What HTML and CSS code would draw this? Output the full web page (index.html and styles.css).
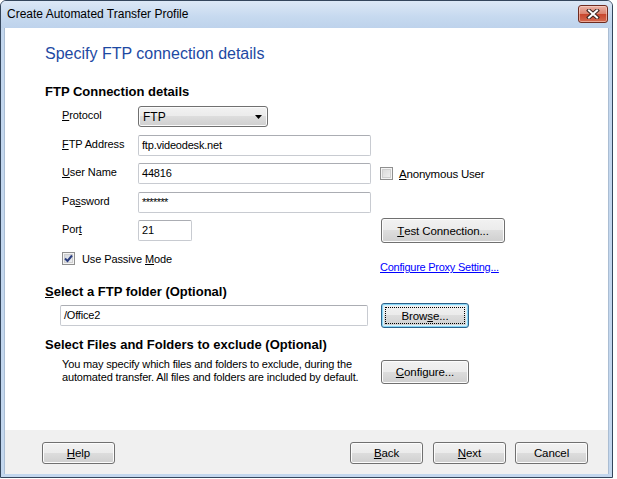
FILE: index.html
```html
<!DOCTYPE html>
<html>
<head>
<meta charset="utf-8">
<link rel="stylesheet" href="styles.css">
</head>
<body>
<div class="window">
  <div class="titlebar">
    <span class="title">Create Automated Transfer Profile</span>
    <div class="close">
      <svg width="14" height="10" viewBox="0 0 14 10">
        <path d="M3 1.5 L11 8.5 M11 1.5 L3 8.5" stroke="#3a2420" stroke-width="4" stroke-linecap="square"/>
        <path d="M3 1.5 L11 8.5 M11 1.5 L3 8.5" stroke="#ffffff" stroke-width="2" stroke-linecap="square"/>
      </svg>
    </div>
  </div>
  <div class="client">
    <div class="content">
      <div class="heading">Specify FTP connection details</div>
      <div class="section section-first">FTP Connection details</div>
      <div class="form-grid">
        <div class="label"><u>P</u>rotocol</div>
        <div class="select"><span>FTP</span><svg width="7" height="4" viewBox="0 0 7 4"><path d="M0 0 H7 L3.5 4 Z" fill="#000"/></svg></div>
        <div></div>

        <div class="label"><u>F</u>TP Address</div>
        <div class="textbox">ftp.videodesk.net</div>
        <div></div>

        <div class="label"><u>U</u>ser Name</div>
        <div class="textbox">44816</div>
        <div class="check-line"><span class="checkbox"></span><span><u>A</u>nonymous User</span></div>

        <div class="label">Pa<u>s</u>sword</div>
        <div class="textbox password">*******</div>
        <div></div>

        <div class="label">Por<u>t</u></div>
        <div class="textbox port">21</div>
        <div class="right-cell"><div class="btn btn-test"><u>T</u>est Connection...</div></div>

        <div class="check-line passive"><span class="checkbox checked"><svg width="11" height="11" viewBox="0 0 11 11"><path d="M2 5.5 L4.5 8 L9 2.5" fill="none" stroke="#2c3f80" stroke-width="2"/></svg></span><span>Use Passive <u>M</u>ode</span></div>
        <div class="link-cell"><span class="link">Configure Proxy Setting...</span></div>
      </div>

      <div class="section section-folder"><u>S</u>elect a FTP folder (Optional)</div>
      <div class="folder-row">
        <div class="textbox folder">/Office2</div>
        <div class="btn btn-browse">Brow<u>s</u>e...</div>
      </div>

      <div class="section section-exclude">Select Files and Folders to exclude (Optional)</div>
      <div class="exclude-row">
        <p class="desc">You may specify which files and folders to exclude, during the<br>automated transfer. All files and folders are included by default.</p>
        <div class="btn btn-configure"><u>C</u>onfigure...</div>
      </div>
    </div>
    <div class="footer">
      <div class="btn btn-foot"><u>H</u>elp</div>
      <div class="spacer"></div>
      <div class="btn btn-foot"><u>B</u>ack</div>
      <div class="btn btn-foot btn-next"><u>N</u>ext</div>
      <div class="btn btn-foot btn-cancel">Cancel</div>
    </div>
  </div>
</div>
</body>
</html>
```

FILE: styles.css
```css
* { box-sizing: border-box; }

body {
  margin: 0;
  background: #ffffff;
  font-family: "Liberation Sans", Arial, sans-serif;
  font-size: 11px;
  color: #000;
}

u { text-decoration: underline; text-underline-offset: 1px; }

.window {
  width: 613px;
  height: 478px;
  border: 1px solid #34465c;
  border-radius: 6px 6px 0 0;
  background: #c3d7ee;
  padding: 0 3px 3px;
  display: flex;
  flex-direction: column;
}

.titlebar {
  height: 27px;
  margin: 0 -3px;
  padding: 0 4px 0 6px;
  display: flex;
  align-items: center;
  background: linear-gradient(#dce8f6, #c6d9ef 60%, #bed3ec);
  border-radius: 5px 5px 0 0;
}

.title {
  font-size: 12px;
  color: #000;
  line-height: 15px;
  margin-top: -1px;
}

.close {
  margin-left: auto;
  align-self: flex-start;
  margin-top: 4px;
  width: 30px;
  height: 18px;
  border: 1px solid #6e2b20;
  border-radius: 3px;
  background: linear-gradient(#eab2a6, #dc8470 48%, #c8472e 52%, #d46a50);
  box-shadow: inset 0 0 0 1px rgba(255, 220, 210, 0.55);
  display: flex;
  align-items: center;
  justify-content: center;
}

.client {
  flex: 1;
  background: #ffffff;
  display: flex;
  flex-direction: column;
  border-left: 1px solid #aabdd3;
  border-right: 1px solid #aabdd3;
}

.content {
  flex: 1;
  padding: 16px 0 0 40px;
}

.heading {
  font-size: 16px;
  line-height: 20px;
  color: #1d49a3;
}

.section {
  font-size: 13px;
  font-weight: bold;
  line-height: 16px;
}

.section-first { margin-top: 20px; }

.form-grid {
  margin-top: 6px;
  margin-left: 17px;
  display: grid;
  grid-template-columns: 67px 233px auto;
  grid-template-rows: 21px 21px 21px 21px 21px 25.5px;
  row-gap: 7.5px;
  column-gap: 9px;
}

.label {
  align-self: center;
  line-height: 13px;
  letter-spacing: -0.1px;
  margin-top: -2px;
  white-space: nowrap;
}

.textbox {
  height: 21px;
  border: 1px solid #c8cbd1;
  border-top-color: #abadb3;
  border-radius: 2px;
  padding: 0 3px;
  line-height: 19px;
  letter-spacing: -0.2px;
  background: #fff;
}

.textbox.password { letter-spacing: -0.6px; line-height: 18px; }
.textbox.port { width: 54px; }

.select {
  width: 130px;
  height: 21px;
  border: 1px solid #707070;
  border-radius: 3px;
  background: linear-gradient(#f2f2f2, #ebebeb 50%, #dddddd 50%, #cfcfcf);
  box-shadow: inset 0 0 0 1px #fbfbfb;
  display: flex;
  align-items: center;
  justify-content: space-between;
  padding: 0 5px 0 4px;
  font-size: 12px;
}

.check-line {
  display: flex;
  align-items: center;
  gap: 6px;
  align-self: center;
}

.check-line span:last-child { font-size: 11.5px; letter-spacing: -0.2px; }

.checkbox {
  width: 13px;
  height: 13px;
  border: 1px solid #8f8f8f;
  background: linear-gradient(135deg, #d6d6d6, #f4f4f4);
  box-shadow: inset 0 0 0 1px #f4f4f4, inset 0 0 0 2px #cfcfcf;
  display: flex;
  align-items: center;
  justify-content: center;
  flex: none;
}

.checkbox.checked {
  background: linear-gradient(135deg, #cdd3dd, #f4f4f4);
}

.passive {
  grid-column: 1 / 3;
  align-self: start;
  margin-top: 3.5px;
  gap: 7px;
}
.passive span:last-child { font-size: 11px; letter-spacing: -0.1px; }

.link-cell {
  align-self: end;
  line-height: 13px;
}

.link {
  color: #0000ff;
  text-decoration: underline;
  letter-spacing: -0.25px;
}

.right-cell {
  align-self: center;
  margin-left: 1px;
}

.btn {
  border: 1px solid #707070;
  border-radius: 3px;
  background: linear-gradient(#f2f2f2, #ebebeb 50%, #dddddd 50%, #cfcfcf);
  box-shadow: inset 0 0 0 1px #fcfcfc;
  display: flex;
  align-items: center;
  justify-content: center;
  font-size: 11.5px;
  letter-spacing: -0.1px;
  position: relative;
}

.btn-test { width: 124px; height: 25px; }

.section-folder { margin-top: 10px; }

.folder-row {
  margin-top: 3px;
  display: flex;
  align-items: center;
}

.textbox.folder {
  width: 308px;
  margin-left: 15px;
}

.btn-browse {
  width: 88px;
  height: 25px;
  margin-left: 13px;
  border-color: #2c628b;
  box-shadow: inset 0 0 0 1px #8ad7f6, inset 0 0 0 2px #d8f0fb;
}

.btn-browse::after {
  content: "";
  position: absolute;
  inset: 3px;
  border: 1px dotted #000;
}

.section-exclude { margin-top: 9px; }

.exclude-row {
  margin-top: 5px;
  display: flex;
  align-items: flex-start;
}

.desc {
  margin: 0 0 0 17px;
  width: 319px;
  line-height: 13px;
  letter-spacing: -0.15px;
  white-space: nowrap;
}

.btn-configure {
  width: 88px;
  height: 24px;
  margin-top: 1.5px;
}

.footer {
  height: 44px;
  background: #f0f0f0;
  display: flex;
  align-items: flex-start;
  padding: 12px 20px 0 37px;
}

.spacer { flex: 1; }

.btn-foot { width: 73px; height: 22px; }
.btn-next { margin-left: 10px; }
.btn-cancel { margin-left: 9px; }
```
